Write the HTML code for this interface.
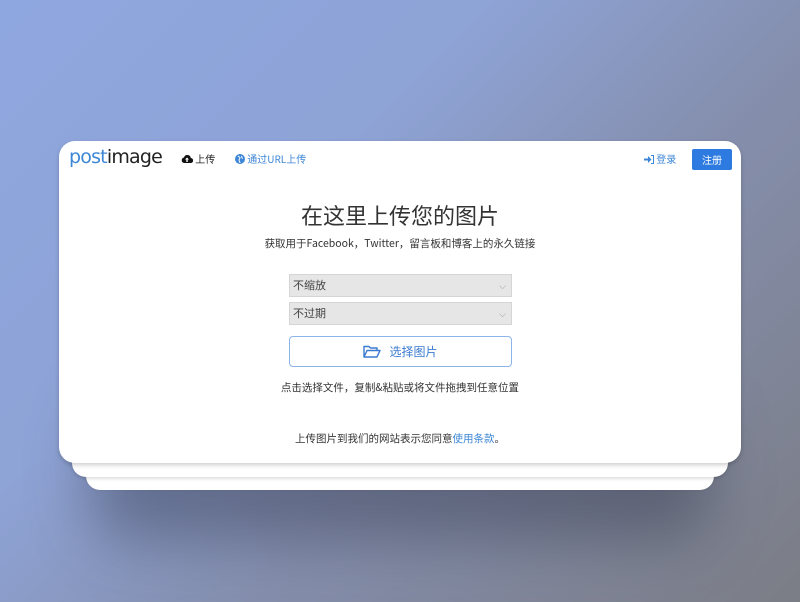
<!DOCTYPE html>
<html><head><meta charset="utf-8"><style>
*{margin:0;padding:0;box-sizing:border-box}
html,body{width:800px;height:602px;overflow:hidden}
body{background:linear-gradient(135deg,#8fa7e0 0%,#8ea3d6 35%,#858fae 60%,#7b7d85 100%);font-family:"Liberation Sans","Noto Sans CJK SC",sans-serif;position:relative}
.shadow{position:absolute;left:90px;top:400px;width:620px;height:140px;background:rgba(40,45,65,.4);filter:blur(30px);border-radius:40px}
.l3{position:absolute;left:86px;top:420px;width:628px;height:70px;background:#fff;border-radius:0 0 14px 14px;box-shadow:0 -2px 4px rgba(0,0,0,.15)}
.l2{position:absolute;left:72px;top:420px;width:656px;height:57px;background:#fff;border-radius:0 0 14px 14px;box-shadow:0 1px 4px rgba(0,0,0,.18)}
.card{position:absolute;left:59px;top:141px;width:682px;height:322px;background:#fff;border-radius:16px;box-shadow:0 2px 5px rgba(0,0,0,.2)}
.logo{position:absolute;left:10px;top:5px;font-size:19px;font-family:"DejaVu Sans",sans-serif;letter-spacing:-.8px}
.nav{position:absolute;top:10px;font-size:10px;font-family:"Noto Sans CJK SC",sans-serif}
.btn{position:absolute;left:633px;top:8px;width:40px;height:21px;background:#2d7be0;color:#fff;font-size:10px;font-family:"Noto Sans CJK SC",sans-serif;text-align:center;line-height:21px;border-radius:2px}
.c{position:absolute;left:0;width:682px;text-align:center;color:#333;font-family:"Noto Sans CJK SC",sans-serif}
.sel{position:absolute;left:230px;width:223px;height:23px;background:#e6e6e6;border:1px solid #d5d5d5;font-size:11px;color:#444;padding-left:3px;line-height:21px;font-family:"Noto Sans CJK SC",sans-serif}
.sel span{position:absolute;right:5px;top:0;color:#999;font-size:9px}
.choose{position:absolute;left:230px;top:195px;width:223px;height:31px;border:1px solid #8db4e8;border-radius:4px;color:#3a7ad0;font-size:12px;text-align:center;line-height:29px;font-family:"Noto Sans CJK SC",sans-serif}
</style></head><body>
<div class="shadow"></div>
<div class="l3"></div><div class="l2"></div>
<div class="card">
<div class="logo"><span style="color:#3d86d6">post</span><span style="color:#222">image</span></div>
<div class="nav" style="left:122px;color:#222"><svg width="12" height="10" viewBox="0 0 12 10" style="vertical-align:-1px"><path d="M3 9h6.5a2.5 2.5 0 0 0 .3-5A3.5 3.5 0 0 0 3 3.5 2.8 2.8 0 0 0 3 9z" fill="#111"/><path d="M6 3.5l-2 2h1.3V8h1.4V5.5H8z" fill="#fff"/></svg> 上传</div>
<div class="nav" style="left:176px;color:#3d86d6"><svg width="10" height="10" viewBox="0 0 10 10" style="vertical-align:-1px"><circle cx="5" cy="5" r="5" fill="#3d86d6"/><path d="M3 2c1 1 2 1 2 2s-1 1-1 2 1 2 1 3M7 2c-1 1 0 2 1 2.5" stroke="#fff" stroke-width="1" fill="none"/></svg> 通过URL上传</div>
<div class="nav" style="left:585px;color:#3d86d6"><svg width="10" height="9" viewBox="0 0 10 9" style="vertical-align:-1px"><path d="M0 3.5h4V1l3.5 3.5L4 8V5.5H0z M7 0h3v9H7V8h2V1H7z" fill="#3d86d6"/></svg> 登录</div>
<div class="btn">注册</div>
<div class="c" style="top:58px;font-size:22px;color:#333">在这里上传您的图片</div>
<div class="c" style="top:95px;font-size:10.5px">获取用于Facebook，Twitter，留言板和博客上的永久链接</div>
<div class="sel" style="top:133px">不缩放<span>⌵</span></div>
<div class="sel" style="top:161px">不过期<span>⌵</span></div>
<div class="choose"><svg width="18" height="13" viewBox="0 0 18 13" style="vertical-align:-2px;margin-right:8px"><path d="M1 12V1.5h5l1.5 1.5H14v2.5M1 12l3-6.5h13L14 12z" stroke="#3a7ad0" stroke-width="1.4" fill="none" stroke-linejoin="round"/></svg>选择图片</div>
<div class="c" style="top:239px;font-size:10.5px">点击选择文件，复制&amp;粘贴或将文件拖拽到任意位置</div>
<div class="c" style="top:290px;font-size:10.5px">上传图片到我们的网站表示您同意<span style="color:#3d86d6">使用条款</span>。</div>
</div>
</body></html>
